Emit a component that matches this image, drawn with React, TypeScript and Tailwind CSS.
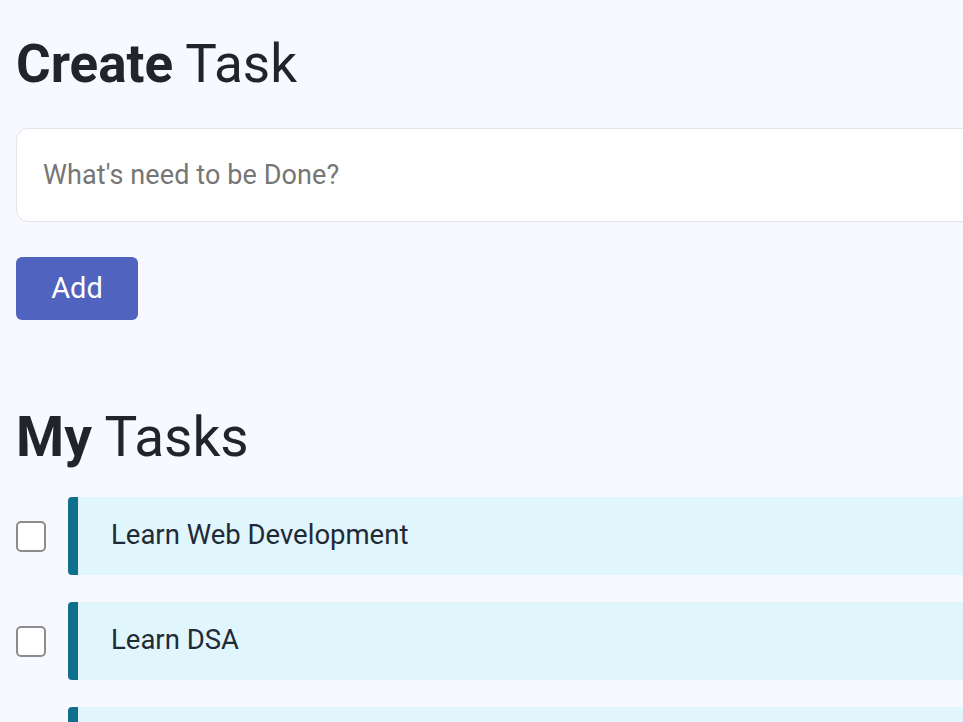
import React from 'react';

const tasks = ['Learn Web Development', 'Learn DSA', 'Learn React'];

export default function App() {
  return (
    <div className="h-screen w-screen overflow-hidden bg-[#f8f9fe] font-['Roboto',sans-serif] text-[#212529]">
      <div className="w-[1200px] px-4 pt-[30px]">
        {/* Create */}
        <h1 className="text-[53px] leading-[68px]">
          <span className="font-bold">Create</span> Task
        </h1>
        <input
          type="text"
          placeholder="What's need to be Done?"
          className="mt-[30px] block h-[94px] w-full rounded-xl border border-[#e3e4e8] bg-white px-[26px] text-[27px] tracking-[0.1px] text-[#212529] outline-none placeholder:text-[#767676]"
        />
        <button className="mt-[35px] block h-[63px] w-[122px] rounded-md bg-[#4f63bf] text-[29px] text-white">
          Add
        </button>

        {/* Tasks */}
        <h2 className="mt-[83px] text-[55px] leading-[68px]">
          <span className="font-bold">My</span> Tasks
        </h2>
        <ul className="mt-[26px] flex flex-col gap-[27px]">
          {tasks.map((task) => (
            <li key={task} className="flex items-center gap-[22px]">
              <span className="block h-[31px] w-[30px] shrink-0 rounded-[5px] border-2 border-[#8c8c8c] bg-white" />
              <div className="flex h-[78px] flex-1 items-center rounded-l-[4px] border-l-[10px] border-[#0e6f8e] bg-[#e1f5fd] pl-[33px] pb-[3px] text-[27.5px] text-[#1f2a37]">
                {task}
              </div>
            </li>
          ))}
        </ul>
      </div>
    </div>
  );
}
